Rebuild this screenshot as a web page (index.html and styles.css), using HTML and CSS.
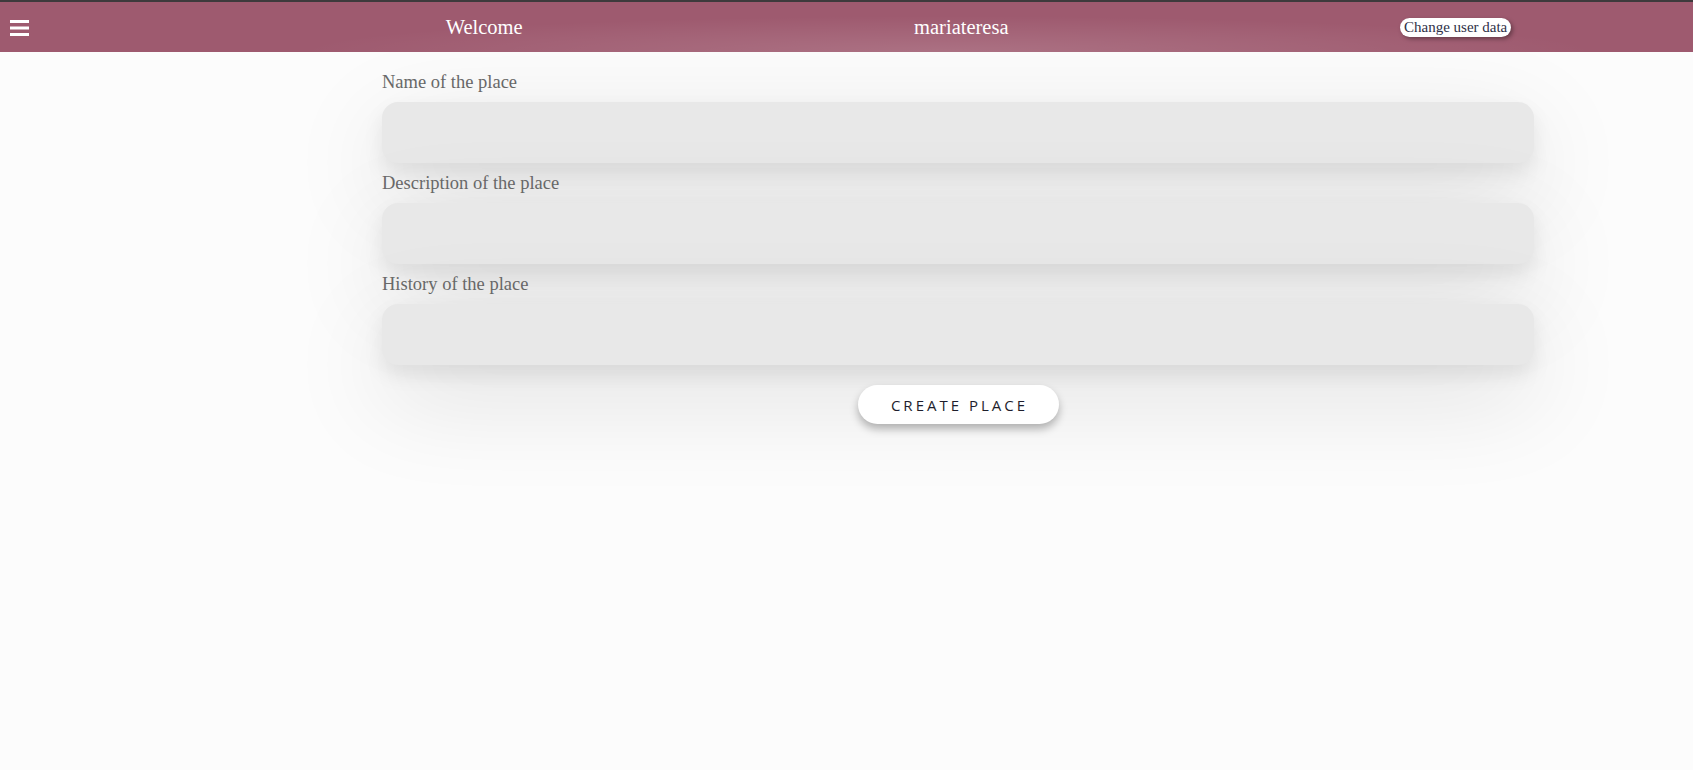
FILE: index.html
```html
<!DOCTYPE html>
<html lang="en">
<head>
<meta charset="utf-8">
<title>Create place</title>
<link rel="stylesheet" href="styles.css">
</head>
<body>
<header class="topbar">
  <button class="menu-btn" aria-label="Menu">
    <svg width="19" height="16" viewBox="0 0 19 16"><rect x="0" y="0" width="19" height="3" fill="#fff"/><rect x="0" y="6.5" width="19" height="3" fill="#fff"/><rect x="0" y="13" width="19" height="3" fill="#fff"/></svg>
  </button>
  <nav class="topnav">
    <span class="nav-item">Welcome</span>
    <span class="nav-item">mariateresa</span>
    <button class="user-btn">Change user data</button>
  </nav>
</header>
<main class="page">
  <form class="place-form">
    <label class="field-label" for="name">Name of the place</label>
    <input class="field-input" id="name" type="text">
    <label class="field-label" for="desc">Description of the place</label>
    <input class="field-input" id="desc" type="text">
    <label class="field-label" for="hist">History of the place</label>
    <input class="field-input" id="hist" type="text">
    <div class="actions">
      <button type="button" class="create-btn">CREATE PLACE</button>
    </div>
  </form>
</main>
</body>
</html>
```
FILE: styles.css
```css
* { box-sizing: border-box; }
html, body { margin: 0; padding: 0; }
body {
  background: #fcfcfc;
  font-family: "Liberation Serif", "Times New Roman", serif;
  min-height: 770px;
  overflow: hidden;
}
.topbar {
  height: 52px;
  border-top: 2px solid #3e3a3c;
  background:
    radial-gradient(ellipse 650px 36px at 56% 100%, rgba(255,255,255,0.14), rgba(255,255,255,0) 100%),
    #9e5a6f;
  display: flex;
  align-items: center;
  overflow: hidden;
  position: relative;
  z-index: 2;
}
.menu-btn {
  background: none;
  border: 0;
  padding: 0;
  margin-left: 10px;
  width: 19px;
  height: 16px;
  display: flex;
  margin-top: 2px;
}
.topnav {
  flex: none;
  width: 1457px;
  margin-left: 221px;
  display: flex;
  justify-content: space-around;
  align-items: center;
}
.nav-item {
  color: #ffffff;
  font-size: 20.5px;
  line-height: 24px;
}
.user-btn {
  font-family: "Liberation Serif", "Times New Roman", serif;
  font-size: 15px;
  line-height: 18px;
  color: #2e3047;
  background: #ffffff;
  border: 0;
  border-radius: 10px;
  padding: 0 4px;
  height: 19px;
  box-shadow: 2px 2px 4px rgba(0,0,0,0.35);
}
.page {
  padding: 10px 159px 0 382px;
}
.place-form {
  display: flex;
  flex-direction: column;
}
.field-label {
  display: block;
  color: #6a6a6a;
  font-size: 18.5px;
  line-height: 21px;
  margin: 9.5px 0 9.5px;
}
.field-input {
  display: block;
  width: 100%;
  height: 61px;
  border: 0;
  border-radius: 16px;
  background: #e8e8e8;
  box-shadow: 0 10px 20px rgba(0,0,0,0.08), 0 30px 100px rgba(0,0,0,0.13);
  outline: none;
}
.actions {
  display: flex;
  justify-content: center;
  padding-top: 20px;
}
.create-btn {
  width: 201px;
  height: 39px;
  border: 0;
  border-radius: 20px;
  background: #ffffff;
  color: #1e1e2c;
  font-family: "Open Sans", "Noto Sans", sans-serif;
  font-size: 15px;
  letter-spacing: 3px;
  padding: 0 0 0 3px;
  box-shadow: 0 5px 9px rgba(0,0,0,0.28);
}
```
